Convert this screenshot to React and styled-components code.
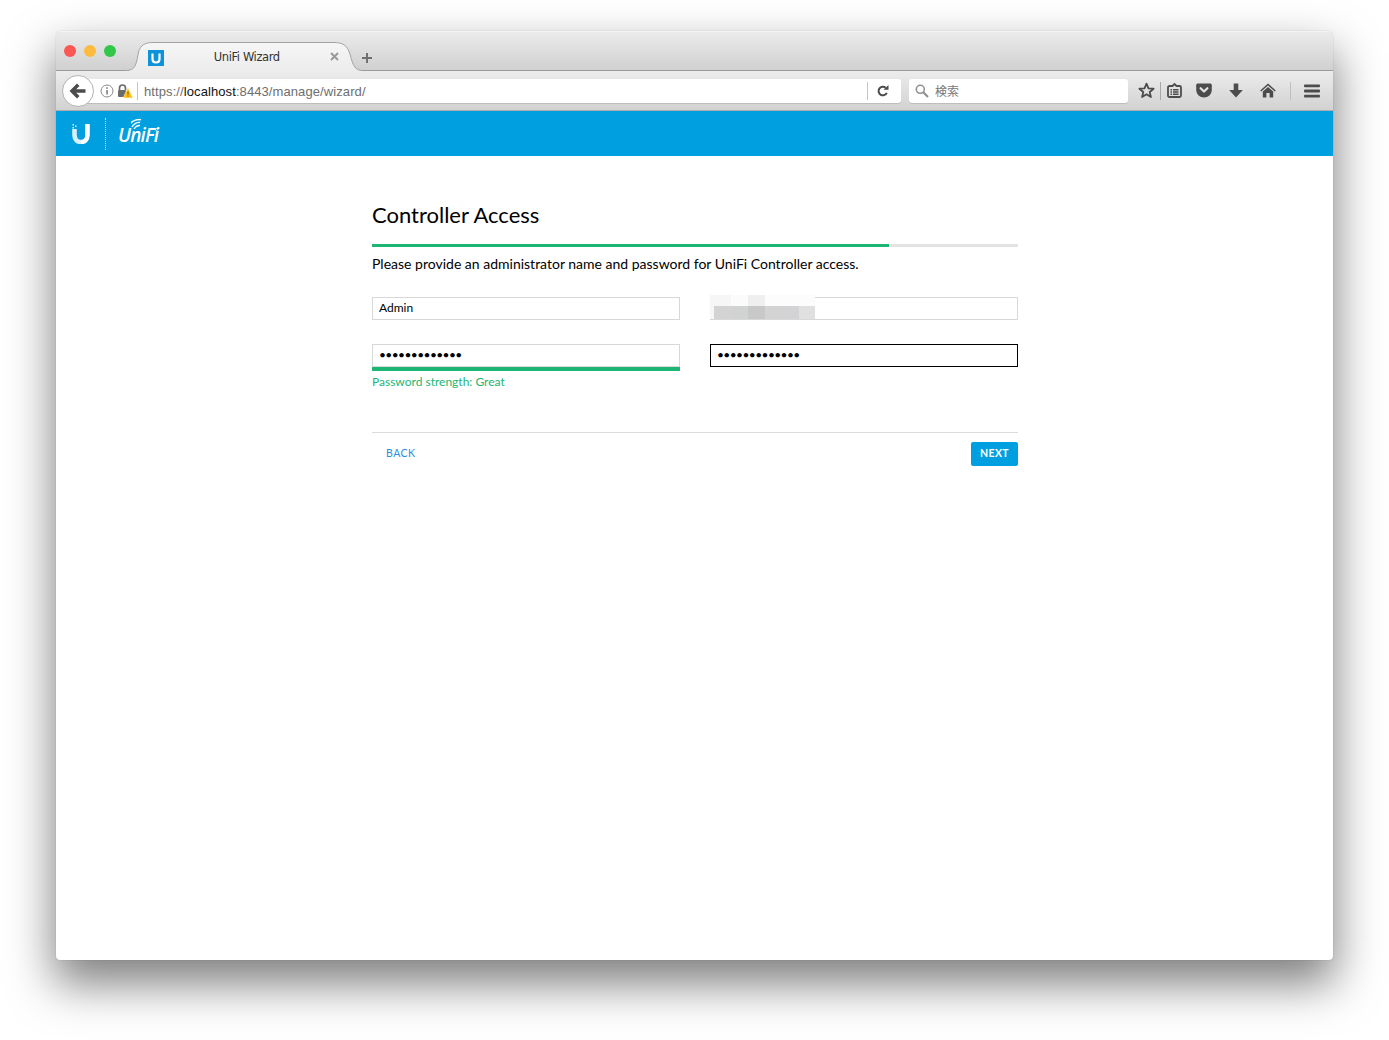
import React from "react";
import styled, { createGlobalStyle } from "styled-components";

const Global = createGlobalStyle`
  html, body { margin: 0; padding: 0; background: #fff; }
  * { box-sizing: border-box; }
`;

const Page = styled.div`
  width: 1389px;
  height: 1040px;
  padding: 31px 56px 0;
  overflow: hidden;
  background: #fff;
`;
const Window = styled.div`
  width: 1277px;
  height: 929px;
  border-radius: 5px 5px 4px 4px;
  background: #fff;
  box-shadow: 0 22px 46px 2px rgba(0, 0, 0, 0.5), 0 0 1px rgba(0, 0, 0, 0.35);
  display: flex;
  flex-direction: column;
  overflow: hidden;
`;
const TitleBar = styled.div`
  height: 40px;
  flex: none;
  display: flex;
  align-items: flex-start;
  padding-left: 8px;
  background: linear-gradient(#ebebeb, #d0d0d0);
  border-top: 1px solid #f4f4f4;
  border-bottom: 1px solid #9b9b9b;
`;
const Lights = styled.div`
  width: 61px;
  flex: none;
  display: flex;
  gap: 8px;
  padding-top: 13px;
`;
const Light = styled.span`
  width: 12px;
  height: 12px;
  border-radius: 50%;
  background: ${(p) => p.$c};
`;
const Tab = styled.div`
  position: relative;
  width: 238px;
  height: 29px;
  margin-top: 10px;
  flex: none;
  display: flex;
  align-items: center;
  padding: 0 15px 0 23px;
`;
const TabShape = styled.svg`
  position: absolute;
  left: 0;
  top: 0;
`;
const Favicon = styled.svg`
  position: relative;
  flex: none;
  margin-top: 2px;
`;
const TabTitle = styled.span`
  position: relative;
  flex: 1;
  text-align: center;
  font: 11.5px "DejaVu Sans", sans-serif;
  letter-spacing: -0.4px;
  color: #333;
`;
const CloseTab = styled.svg`
  position: relative;
  flex: none;
  margin-right: 9.5px;
`;
const NewTab = styled.svg`
  flex: none;
  margin: 20px 0 0 -2px;
`;
const Toolbar = styled.div`
  height: 40px;
  flex: none;
  display: flex;
  align-items: center;
  padding-left: 6px;
  background: linear-gradient(#ececec, #d2d2d2);
  border-bottom: 1px solid #adadad;
`;
const BackButton = styled.div`
  position: relative;
  z-index: 1;
  width: 32px;
  height: 32px;
  flex: none;
  padding-right: 2px;
  border-radius: 50%;
  background: #fff;
  border: 1px solid #b3b3b3;
  display: flex;
  align-items: center;
  justify-content: center;
`;
const UrlBar = styled.div`
  width: 815px;
  height: 24px;
  flex: none;
  margin-left: -8px;
  padding-left: 13px;
  background: #fff;
  border-radius: 0 3px 3px 0;
  box-shadow: 0 1px 0 #bdbdbd;
  display: flex;
  align-items: center;
`;
const Info = styled.svg`
  flex: none;
  margin-left: 1px;
`;
const Lock = styled.svg`
  flex: none;
  margin-left: 3px;
`;
const Sep = styled.span`
  width: 1px;
  height: 18px;
  flex: none;
  background: ${(p) => p.$c || "#c4c4c4"};
  margin-left: ${(p) => p.$l || 0}px;
`;
const Url = styled.div`
  flex: 1;
  margin-left: 6px;
  padding-top: 1px;
  font: 13px "Liberation Sans", sans-serif;
  letter-spacing: 0.09px;
  color: #6e6e6e;
  white-space: nowrap;
`;
const Host = styled.span`
  color: #111;
`;
const Reload = styled.svg`
  flex: none;
  margin: 0 12px 0 9px;
`;
const SearchBox = styled.div`
  width: 219px;
  height: 24px;
  flex: none;
  margin-left: 8px;
  padding-left: 6px;
  background: #fff;
  border-radius: 3px;
  box-shadow: 0 1px 0 #bdbdbd;
  display: flex;
  align-items: center;
  gap: 6px;
`;
const SearchText = styled.span`
  font: 12px "Noto Sans CJK JP", sans-serif;
  color: #777;
`;
const ToolIcons = styled.div`
  display: flex;
  align-items: center;
  height: 24px;
  margin-left: 10px;
`;
const ToolIcon = styled.svg`
  flex: none;
  margin-left: ${(p) => p.$l || 0}px;
`;
const AppBar = styled.div`
  height: 45px;
  flex: none;
  background: #009fe0;
  display: flex;
  align-items: center;
  padding-left: 16px;
`;
const DottedRule = styled.span`
  height: 32px;
  margin: 0 12px 0 15px;
  border-left: 1px dotted rgba(255, 255, 255, 0.75);
`;
const LogoWord = styled.span`
  position: relative;
  display: block;
  font: italic 600 19px "Open Sans", sans-serif;
  letter-spacing: -0.8px;
  color: #fff;
  line-height: 24px;
  margin-top: 3px;
`;
const LogoArcs = styled.svg`
  position: absolute;
  left: 13px;
  top: -4px;
`;
const Reg = styled.span`
  position: absolute;
  left: 37px;
  top: 5px;
  width: 3px;
  height: 3px;
  border-radius: 50%;
  border: 0.5px solid rgba(255, 255, 255, 0.8);
`;
const Content = styled.main`
  width: 646px;
  margin-left: 316px;
  padding-top: 45px;
  font-family: Lato, sans-serif;
  color: #000;
`;
const Heading = styled.h1`
  margin: 0;
  font: 400 22px/28px Lato, sans-serif;
  color: #000;
`;
const Progress = styled.div`
  height: 3px;
  margin-top: 15px;
  background: #e3e3e3;
`;
const ProgressFill = styled.div`
  height: 100%;
  width: 80%;
  background: #1bb673;
`;
const Lead = styled.p`
  margin: 7px 0 0;
  font: 400 14px/20px Lato, sans-serif;
  color: #000;
`;
const Fields = styled.div`
  display: grid;
  grid-template-columns: 308px 308px;
  column-gap: 30px;
  row-gap: 24px;
  margin-top: 23px;
`;
const Field = styled.div`
  position: relative;
  min-width: 0;
`;
const Input = styled.input`
  display: block;
  width: 100%;
  height: 23px;
  padding: 0 6px 2px;
  margin: 0;
  background: #fff;
  border: 1px solid ${(p) => (p.$focus ? "#000" : "#d8d8d8")};
  border-radius: 0;
  outline: none;
  font: 400 12px Lato, sans-serif;
  color: #000;
  &[type="password"] {
    letter-spacing: -0.6px;
  }
`;
const StrengthBar = styled.div`
  height: 4px;
  background: #1bb673;
`;
const Strength = styled.div`
  font: 400 12px/16px Lato, sans-serif;
  color: #1bb673;
  margin-top: 3px;
`;
const Blur = styled.div`
  position: absolute;
  left: 0;
  top: -2px;
  width: 105px;
  height: 24px;
  display: grid;
  grid-template-columns: 4px 17px 17px 17px 17px 17px 16px;
  grid-template-rows: 11px 13px;
`;
const BlurCell = styled.span`
  background: ${(p) => p.$c};
`;
const Footer = styled.div`
  margin-top: 42px;
  padding: 9px 0 0 14px;
  border-top: 1px solid #dcdcdc;
  display: flex;
  align-items: center;
  justify-content: space-between;
`;
const BackLink = styled.a`
  font: 400 10.5px Lato, sans-serif;
  letter-spacing: 0.5px;
  color: #2a8ee0;
  padding-bottom: 2px;
`;
const NextButton = styled.button`
  width: 47px;
  height: 24px;
  padding: 0 0 2px;
  border: 0;
  border-radius: 2px;
  background: #009fe0;
  color: #fff;
  font: 700 10.5px Lato, sans-serif;
  letter-spacing: 0.4px;
`;

const blur = [
  "#f5f6f5", "#f5f6f5", "#fafbfa", "#efefef", "#fbfcfb", "#fbfcfb", "#fcfcfc",
  "#f6f6f6", "#d2d3d2", "#d0d3d1", "#c8c8c8", "#d3d3d3", "#d3d3d6", "#e0e0e0",
];

const dark = "#4c4c4c";

export default function App() {
  return (
    <Page>
      <Global />
      <Window>
        <TitleBar>
          <Lights>
            <Light $c="#fc5753" />
            <Light $c="#fdbc40" />
            <Light $c="#33c748" />
          </Lights>
          <Tab>
            <TabShape width="238" height="29" viewBox="0 0 238 29">
              <defs>
                <linearGradient id="tabFill" x1="0" y1="0" x2="0" y2="1">
                  <stop offset="0" stopColor="#f6f6f6" />
                  <stop offset="1" stopColor="#ececec" />
                </linearGradient>
              </defs>
              <path
                d="M0 28.5C8 28.5 10 26 12 18L13.5 10C15.5 3 20 .5 28 .5H208C218 .5 222 3 225 12C228 24 230 28.5 238 28.5V29H0Z"
                fill="url(#tabFill)"
              />
              <path
                d="M0 28.5C8 28.5 10 26 12 18L13.5 10C15.5 3 20 .5 28 .5H208C218 .5 222 3 225 12C228 24 230 28.5 238 28.5"
                fill="none"
                stroke="#a3a3a3"
              />
            </TabShape>
            <Favicon width="16" height="16" viewBox="0 0 16 16">
              <rect width="16" height="16" fill="#0d93d9" />
              <path d="M4.5 3.5V9C4.5 11.5 6 12.5 8 12.5S11.5 11.5 11.5 9V3.5" fill="none" stroke="#fff" strokeWidth="2.2" />
            </Favicon>
            <TabTitle>UniFi Wizard</TabTitle>
            <CloseTab width="9" height="9" viewBox="0 0 9 9">
              <path d="M1 1L8 8M8 1L1 8" stroke="#9a9a9a" strokeWidth="2" />
            </CloseTab>
          </Tab>
          <NewTab width="12" height="12" viewBox="0 0 12 12">
            <path d="M6 1V11M1 6H11" stroke="#707070" strokeWidth="2" />
          </NewTab>
        </TitleBar>
        <Toolbar>
          <BackButton>
            <svg width="17" height="16" viewBox="0 0 17 16">
              <path d="M8 0.5L.5 8L8 15.5L10.5 13L7.2 9.8H16.5V6.2H7.2L10.5 3Z" fill={dark} />
            </svg>
          </BackButton>
          <UrlBar>
            <Info width="14" height="14" viewBox="0 0 14 14">
              <circle cx="7" cy="7" r="6" fill="none" stroke="#8a8a8a" />
              <rect x="6.3" y="6" width="1.5" height="4.5" fill="#777" />
              <rect x="6.3" y="3.3" width="1.5" height="1.5" fill="#777" />
            </Info>
            <Lock width="16" height="14" viewBox="0 0 16 14">
              <path d="M2.5 6V4.2C2.5 2.3 3.8 1 5.5 1S8.5 2.3 8.5 4.2V6" fill="none" stroke="#6b6b6b" strokeWidth="1.7" />
              <rect x="1" y="6" width="8" height="7" rx="1" fill="#6b6b6b" />
              <path d="M11 3.5L16 14H6Z" fill="#fdc010" stroke="#fff" strokeWidth="0.5" />
              <rect x="10.5" y="7.5" width="1" height="3.2" fill="#7a5a00" />
              <rect x="10.5" y="11.5" width="1" height="1.1" fill="#7a5a00" />
            </Lock>
            <Sep $l={4} />
            <Url>
              https://<Host>localhost</Host>:8443/manage/wizard/
            </Url>
            <Sep />
            <Reload width="12" height="12" viewBox="0 0 12 12">
              <path d="M9.8 7.8A4.3 4.3 0 1 1 8.6 2.7" fill="none" stroke={dark} strokeWidth="2" />
              <path d="M6.5 4.8H11.5V0Z" fill={dark} />
            </Reload>
          </UrlBar>
          <SearchBox>
            <svg width="14" height="14" viewBox="0 0 14 14">
              <circle cx="5.3" cy="5.3" r="4" fill="none" stroke="#909090" strokeWidth="1.6" />
              <path d="M8.3 8.3L13 13" stroke="#909090" strokeWidth="2.2" />
            </svg>
            <SearchText>検索</SearchText>
          </SearchBox>
          <ToolIcons>
            <ToolIcon width="17" height="17" viewBox="0 0 17 17">
              <path d="M8.5 1.6L10.5 6.3L15.6 6.7L11.7 10L12.9 15L8.5 12.3L4.1 15L5.3 10L1.4 6.7L6.5 6.3Z" fill="none" stroke={dark} strokeWidth="1.8" strokeLinejoin="round" />
            </ToolIcon>
            <Sep $l={5} $c="#a8a8a8" />
            <ToolIcon $l={6} width="15" height="15" viewBox="0 0 15 15">
              <path d="M2.5 3H5.5L7.5 1L9.5 3H12.5C13.5 3 14 3.5 14 4.5V12.5C14 13.5 13.5 14 12.5 14H2.5C1.5 14 1 13.5 1 12.5V4.5C1 3.5 1.5 3 2.5 3Z" fill="none" stroke={dark} strokeWidth="1.8" />
              <path d="M3.5 6H5V7.4H3.5ZM6 6H11.5V7.4H6ZM3.5 8.3H5V9.7H3.5ZM6 8.3H11.5V9.7H6ZM3.5 10.6H5V12H3.5ZM6 10.6H11.5V12H6Z" fill={dark} />
            </ToolIcon>
            <ToolIcon $l={14} width="16" height="15" viewBox="0 0 16 15">
              <path d="M2 .5H14C15 .5 15.8 1.2 15.8 2.2V7C15.8 11.5 12 14.5 8 14.5S.2 11.5.2 7V2.2C.2 1.2 1 .5 2 .5Z" fill={dark} />
              <path d="M4.6 5.2L8 8.5L11.4 5.2" fill="none" stroke="#e4e4e4" strokeWidth="2.2" strokeLinecap="round" strokeLinejoin="round" />
            </ToolIcon>
            <ToolIcon $l={17} width="14" height="15" viewBox="0 0 14 15">
              <path d="M4.7 .5H9.3V7H13.8L7 14.5L.2 7H4.7Z" fill={dark} />
            </ToolIcon>
            <ToolIcon $l={17} width="16" height="15" viewBox="0 0 16 15">
              <path d="M8 .5L15.8 7.5L14.8 8.6L8 2.6L1.2 8.6L.2 7.5Z" fill={dark} />
              <path d="M8 4L13.2 8.6V14.5H9.6V10H6.4V14.5H2.8V8.6Z" fill={dark} />
            </ToolIcon>
            <Sep $l={14} $c="#c0c0c0" />
            <ToolIcon $l={13} width="16" height="14" viewBox="0 0 16 14">
              <rect y="0.5" width="16" height="2.8" rx="1" fill={dark} />
              <rect y="5.6" width="16" height="2.8" rx="1" fill={dark} />
              <rect y="10.7" width="16" height="2.8" rx="1" fill={dark} />
            </ToolIcon>
          </ToolIcons>
        </Toolbar>
        <AppBar>
          <svg width="18" height="20" viewBox="0 0 18 20">
            <path d="M15.5 0V11C15.5 15.5 12.8 18 9 18" fill="none" stroke="#fff" strokeWidth="4.6" />
            <path d="M2.5 5V11C2.5 15.5 5.2 18 9 18" fill="none" stroke="#d8f0fb" strokeWidth="4.6" />
            <path d="M0.5 0H2V1.5H.5ZM3 1.5H4.5V3H3ZM.5 3H2V4.5H.5Z" fill="#e6f6fd" />
          </svg>
          <DottedRule />
          <LogoWord>
            UniFi
            <LogoArcs width="16" height="11" viewBox="0 0 16 11">
              <path d="M1 8C3 4 7 3 9 3.5M3 10C5 7 7.5 6.3 9 6.6M-1 5C2 .8 7 0 10 .8" fill="none" stroke="#fff" strokeWidth="1.3" />
            </LogoArcs>
            <Reg />
          </LogoWord>
        </AppBar>
        <Content>
          <Heading>Controller Access</Heading>
          <Progress>
            <ProgressFill />
          </Progress>
          <Lead>Please provide an administrator name and password for UniFi Controller access.</Lead>
          <Fields>
            <Field>
              <Input type="text" readOnly value="Admin" />
            </Field>
            <Field>
              <Input type="text" readOnly value="" />
              <Blur>
                {blur.map((c, i) => (
                  <BlurCell key={i} $c={c} />
                ))}
              </Blur>
            </Field>
            <Field>
              <Input type="password" readOnly value="abcdefghijklm" />
              <StrengthBar />
              <Strength>Password strength: Great</Strength>
            </Field>
            <Field>
              <Input $focus type="password" readOnly value="abcdefghijklm" />
            </Field>
          </Fields>
          <Footer>
            <BackLink>BACK</BackLink>
            <NextButton>NEXT</NextButton>
          </Footer>
        </Content>
      </Window>
    </Page>
  );
}
